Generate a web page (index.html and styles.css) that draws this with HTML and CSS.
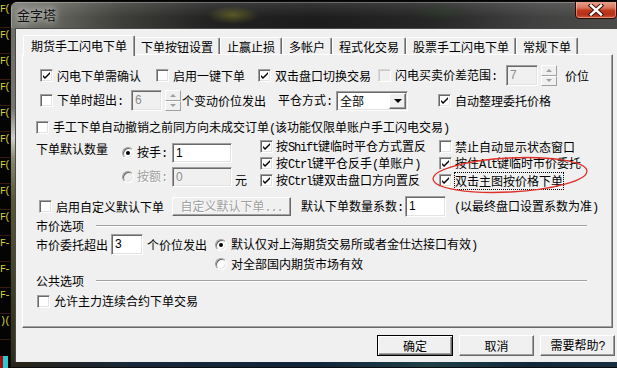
FILE: index.html
```html
<!DOCTYPE html>
<html lang="zh-CN">
<head>
    <meta charset="UTF-8">
    <meta name="viewport" content="width=device-width, initial-scale=1.0">
    <title>金字塔</title>
    <link rel="stylesheet" href="styles.css">
</head>
<body>
    <div class="desk">
        <div class="tick">F(</div>
        <div class="tick">F(</div>
        <div class="tick">F(</div>
        <div class="tick">F(</div>
        <div class="tick">F(</div>
        <div class="tick">F(</div>
        <div class="tick">F(</div>
        <div class="tick">F(</div>
        <div class="tick">F(</div>
        <div class="tick">F-</div>
        <div class="tick">F-</div>
        <div class="tick">F-</div>
        <div class="tick">)(</div>
        <div class="tick cyan"></div>
    </div>

    <div class="win">
        <div class="titlebar">
            <span class="title">金字塔</span>
            <span class="close">
                <svg width="16" height="12" viewBox="0 0 16 12">
                    <path d="M3 1.5 L13 10.5 M13 1.5 L3 10.5" stroke="#3a1008" stroke-width="4.4" stroke-linecap="square"/>
                    <path d="M3 1.5 L13 10.5 M13 1.5 L3 10.5" stroke="#fff" stroke-width="2.4" stroke-linecap="square"/>
                </svg>
            </span>
        </div>

        <div class="frame">
            <div class="frame-l"></div>
            <div class="client">
                <div class="tabs">
                    <span class="tab sel">期货手工闪电下单</span>
                    <span class="tab">下单按钮设置</span>
                    <span class="tab">止赢止损</span>
                    <span class="tab">多帐户</span>
                    <span class="tab">程式化交易</span>
                    <span class="tab">股票手工闪电下单</span>
                    <span class="tab">常规下单</span>
                </div>

                <div class="panel">
                    <!-- row 1 -->
                    <div class="row r1">
                        <span class="cb on"></span><span class="lb">闪电下单需确认</span>
                        <span class="cb ml15"></span><span class="lb">启用一键下单</span>
                        <span class="cb on ml13"></span><span class="lb">双击盘口切换交易</span>
                        <span class="cb off ml7"></span><span class="lb">闪电买卖价差范围<span class="lat">:</span></span>
                        <span class="edit dis w32 ml9">7</span>
                        <span class="spin ml3"><span><i class="up"></i></span><span><i class="down"></i></span></span>
                        <span class="lb ml8">价位</span>
                    </div>

                    <!-- row 2 -->
                    <div class="row r2">
                        <span class="cb"></span><span class="lb">下单时超出<span class="lat">:</span></span>
                        <span class="edit dis w31 ml8">6</span>
                        <span class="spin ml3"><span><i class="up"></i></span><span><i class="down"></i></span></span>
                        <span class="lb ml1">个变动价位发出</span>
                        <span class="lb ml12">平仓方式<span class="lat">:</span></span>
                        <span class="combo ml4"><span class="val">全部</span><span class="dd"><i></i></span></span>
                        <span class="cb on ml30"></span><span class="lb">自动整理委托价格</span>
                    </div>

                    <!-- row 3 -->
                    <div class="row r3">
                        <span class="cb"></span><span class="lb">手工下单自动撤销之前同方向未成交订单<span class="lat">(</span>该功能仅限单账户手工闪电交易<span class="lat">)</span></span>
                    </div>

                    <!-- default quantity block -->
                    <div class="block">
                        <span class="lb qty">下单默认数量</span>
                        <div class="radios">
                            <div class="rrow">
                                <span class="rd on"></span><span class="lb">按手<span class="lat">:</span></span>
                                <span class="edit w60">1</span>
                            </div>
                            <div class="rrow">
                                <span class="rd off"></span><span class="lb gray">按额<span class="lat">:</span></span>
                                <span class="edit dis w60">0</span>
                            </div>
                        </div>
                        <span class="lb yuan">元</span>
                        <div class="keys">
                            <div class="kitem"><span class="cb on"></span><span class="lb">按<span class="lat">Shift</span>键临时平仓方式置反</span></div>
                            <div class="kitem"><span class="cb"></span><span class="lb">禁止自动显示状态窗口</span></div>
                            <div class="kitem"><span class="cb on"></span><span class="lb">按<span class="lat">Ctrl</span>键平仓反手<span class="lat">(</span>单账户<span class="lat">)</span></span></div>
                            <div class="kitem"><span class="cb on"></span><span class="lb">按住<span class="lat">Alt</span>键临时市价委托</span></div>
                            <div class="kitem"><span class="cb on"></span><span class="lb">按<span class="lat">Ctrl</span>键双击盘口方向置反</span></div>
                            <div class="kitem"><span class="cb on"></span><span class="lb focus">双击主图按价格下单</span></div>
                        </div>
                    </div>

                    <!-- row 7 -->
                    <div class="row r7">
                        <span class="cb"></span><span class="lb">启用自定义默认下单</span>
                        <span class="pbtn dis ml8">自定义默认下单<span class="lat">...</span></span>
                        <span class="lb ml10">默认下单数量系数<span class="lat">:</span></span>
                        <span class="edit w41 ml2">1</span>
                        <span class="lb ml8"><span class="lat">(</span>以最终盘口设置系数为准<span class="lat">)</span></span>
                    </div>

                    <div class="row grp r8">
                        <span class="lb">市价选项</span><span class="etch"></span>
                    </div>

                    <div class="row r9">
                        <span class="lb">市价委托超出</span>
                        <span class="edit w32 ml3">3</span>
                        <span class="lb ml4">个价位发出</span>
                        <span class="rd on ml8"></span><span class="lb">默认仅对上海期货交易所或者金仕达接口有效<span class="lat">)</span></span>
                    </div>

                    <div class="row r10">
                        <span class="rd"></span><span class="lb">对全部国内期货市场有效</span>
                    </div>

                    <div class="row grp r11">
                        <span class="lb">公共选项</span><span class="etch"></span>
                    </div>

                    <div class="row r12">
                        <span class="cb"></span><span class="lb">允许主力连续合约下单交易</span>
                    </div>

                    <svg class="mark" width="162" height="42" viewBox="0 0 162 42">
                        <ellipse cx="81" cy="21" rx="77" ry="17" fill="none" stroke="#e0302a" stroke-width="1.3" transform="rotate(-3 81 21)"/>
                    </svg>
                </div>

                <div class="btns">
                    <button class="btn def">确定</button>
                    <button class="btn">取消</button>
                    <button class="btn">需要帮助<span class="lat">?</span></button>
                </div>
            </div>
        </div>
        <div class="frame-b"></div>
    </div>
</body>
</html>
```

FILE: styles.css
```css
body {
    margin: 0;
    width: 617px;
    height: 368px;
    overflow: hidden;
    position: relative;
    background: #040404;
    font-family: "Noto Sans CJK SC", sans-serif;
    font-size: 12px;
    color: #000;
}

/* desktop behind the dialog */
.desk {
    width: 10px;
    padding-top: 2px;
}
.tick {
    height: 25px;
    border-bottom: 1px solid #3c1a10;
    color: #d8d43a;
    font-family: "Liberation Mono", monospace;
    font-size: 10px;
    line-height: 16px;
    letter-spacing: -1.6px;
    white-space: nowrap;
}
.tick.cyan {
    border: none;
    height: 12px;
    margin-top: 16px;
    background: linear-gradient(90deg, #a01010 0 3px, #30c8d0 3px 8px, #000 8px);
}

/* window frame, cut by the right edge of the shot */
.win {
    position: absolute;
    left: 10px;
    top: 1px;
    width: 607px;
    height: 367px;
    border-radius: 7px 0 0 0;
    border: 1px solid #0c0c0c;
    border-right: none;
    box-sizing: border-box;
    overflow: hidden;
    background: #2a2a28;
}
.titlebar {
    height: 26px;
    position: relative;
    background:
        radial-gradient(ellipse 26px 9px at 222px 13px, rgba(150, 150, 40, 0.45), transparent),
        radial-gradient(ellipse 30px 9px at 430px 10px, rgba(40, 70, 40, 0.35), transparent),
        linear-gradient(180deg, rgba(255, 255, 255, 0.12), rgba(0, 0, 0, 0) 60%),
        linear-gradient(90deg, #7a7a74 0, #66665f 40px, #3e3e3a 110px, #222 200px, #1c1c1c 300px, #262626 420px, #404040 520px, #4a4a48 600px);
    box-shadow: inset 1px 1px rgba(255, 255, 255, 0.25);
}
.title {
    position: absolute;
    left: 6px;
    top: 5px;
    font-size: 13px;
    line-height: 16px;
    color: #111;
    text-shadow: 0 0 6px rgba(255, 255, 255, 0.8), 0 0 10px rgba(255, 255, 255, 0.5);
}
.close {
    position: absolute;
    left: 564px;
    top: -2px;
    width: 42px;
    height: 19px;
    border: 1px solid #2a0a06;
    border-radius: 0 0 4px 4px;
    box-sizing: border-box;
    background: linear-gradient(180deg, #e9a893 0, #d9745c 40%, #c23a1c 55%, #b3301a 80%, #d0583a 100%);
    box-shadow: inset 0 0 0 1px rgba(255, 220, 200, 0.45);
    display: flex;
    align-items: center;
    justify-content: center;
}

.frame {
    display: flex;
    height: 334px;
}
.frame-l {
    width: 4px;
    background: linear-gradient(180deg, #6e6e68 0, #77776f 80px, #d0d0c8 110px, #8a8a70 130px, #5a5a38 170px, #3e3e22 260px, #2e2e1c 334px);
}
.client {
    flex: 1;
    background: #f0f0f0;
    border-top: 1px solid #4a4a48;
    border-left: 1px solid #4a4a48;
    box-sizing: border-box;
}
.frame-b {
    height: 6px;
    background: linear-gradient(90deg, #2a2418 0, #18283a 120px, #10243a 300px, #1e4048 420px, #12283a 520px, #1a3040 607px);
}

/* tabs */
.tabs {
    display: flex;
    align-items: flex-end;
    height: 18px;
    margin-top: 7px;
    padding-left: 7px;
    position: relative;
    z-index: 1;
}
.tab {
    height: 17px;
    padding: 0 6px;
    line-height: 17px;
    white-space: nowrap;
    border-top: 1px solid #fff;
    border-left: 1px solid #fff;
    border-right: 1px solid #696969;
    box-shadow: inset -1px 0 #a0a0a0;
    border-radius: 2px 2px 0 0;
    box-sizing: border-box;
    background: #f0f0f0;
}
.tab.sel {
    height: 21px;
    padding: 0 7px;
    line-height: 19px;
    margin-bottom: -2px;
}
.tab.sel + .tab {
    border-left: none;
}

/* tab page */
.panel {
    position: relative;
    margin-left: 6px;
    width: 591px;
    height: 274px;
    box-sizing: border-box;
    border: 1px solid;
    border-color: #fff #696969 #696969 #fff;
    box-shadow: inset -1px -1px #a0a0a0;
}
.row {
    display: flex;
    align-items: center;
    height: 21px;
}
.r1 { margin-top: 10px; padding-left: 17px; }
.r2 { margin-top: 4px; padding-left: 17px; }
.r3 { margin-top: 8px; height: 17px; padding-left: 13px; }
.r7 { margin-top: 7px; padding-left: 16px; }
.r8 { margin-top: 1px; height: 16px; }
.r9 { margin-top: 0; padding-left: 13px; }
.r10 { margin-top: 1px; height: 16px; padding-left: 192px; }
.r11 { margin-top: 1px; height: 16px; }
.r12 { margin-top: 4px; height: 16px; padding-left: 14px; }

.grp {
    padding-left: 13px;
}
.etch {
    margin-left: 12px;
    width: 491px;
    height: 0;
    border-top: 1px solid #a0a0a0;
    border-bottom: 1px solid #fff;
}

.lb {
    white-space: nowrap;
    line-height: 16px;
}
.cb + .lb { margin-left: 4px; }
.rd + .lb { margin-left: 4px; }
.lat {
    font-family: "Liberation Mono", monospace;
    letter-spacing: -1.2px;
}
.gray {
    color: #a0a0a0;
    text-shadow: 1px 1px 0 #fff;
}

.ml1 { margin-left: 1px; }
.ml2 { margin-left: 2px; }
.ml3 { margin-left: 3px; }
.ml4 { margin-left: 4px; }
.ml7 { margin-left: 7px; }
.ml8 { margin-left: 8px; }
.ml9 { margin-left: 9px; }
.ml10 { margin-left: 10px; }
.ml12 { margin-left: 12px; }
.ml13 { margin-left: 13px; }
.ml15 { margin-left: 15px; }
.ml30 { margin-left: 30px; }

/* checkbox */
.cb {
    position: relative;
    flex: none;
    width: 13px;
    height: 13px;
    box-sizing: border-box;
    background: #fff;
    border: 1px solid;
    border-color: #a0a0a0 #fff #fff #a0a0a0;
    box-shadow: inset 1px 1px #696969, inset -1px -1px #e3e3e3;
}
.cb.on::after {
    content: "";
    position: absolute;
    left: 2px;
    top: 2px;
    width: 7px;
    height: 7px;
    background: #000;
    clip-path: polygon(0 42%, 28% 70%, 100% 0, 100% 30%, 28% 100%, 0 72%);
}
.cb.off {
    background: #f0f0f0;
    border-color: #d8d8d8 #fff #fff #d8d8d8;
    box-shadow: inset 1px 1px #c8c8c8;
}

/* radio */
.rd {
    position: relative;
    flex: none;
    width: 12px;
    height: 12px;
    box-sizing: border-box;
    border-radius: 50%;
    background: #fff;
    border: 1px solid;
    border-color: #a0a0a0 #fff #fff #a0a0a0;
    box-shadow: inset 1px 1px #696969, inset -1px -1px #e3e3e3;
}
.rd.on::after {
    content: "";
    position: absolute;
    left: 3px;
    top: 3px;
    width: 4px;
    height: 4px;
    border-radius: 50%;
    background: #000;
}
.rd.off {
    background: #f0f0f0;
}

/* edit boxes */
.edit {
    flex: none;
    height: 21px;
    box-sizing: border-box;
    padding-left: 3px;
    line-height: 18px;
    background: #fff;
    border: 1px solid;
    border-color: #a0a0a0 #fff #fff #a0a0a0;
    box-shadow: inset 1px 1px #696969, inset -1px -1px #e3e3e3;
    font-family: "Liberation Sans", sans-serif;
}
.edit.dis {
    background: #f0f0f0;
    color: #8c8c8c;
}
.w31 { width: 31px; }
.w32 { width: 32px; }
.w41 { width: 41px; }
.w60 { width: 60px; height: 20px; }

.spin {
    flex: none;
    display: flex;
    flex-direction: column;
    width: 16px;
    height: 21px;
}
.spin > span {
    flex: 1;
    display: flex;
    align-items: center;
    justify-content: center;
    background: #f0f0f0;
    border: 1px solid;
    border-color: #fff #a0a0a0 #a0a0a0 #fff;
}
.spin i {
    width: 0;
    height: 0;
    border-left: 3px solid transparent;
    border-right: 3px solid transparent;
}
.spin i.up { border-bottom: 3px solid #a0a0a0; }
.spin i.down { border-top: 3px solid #a0a0a0; }

.combo {
    flex: none;
    display: flex;
    align-items: center;
    width: 72px;
    height: 20px;
    box-sizing: border-box;
    background: #fff;
    border: 1px solid;
    border-color: #a0a0a0 #fff #fff #a0a0a0;
    box-shadow: inset 1px 1px #696969, inset -1px -1px #e3e3e3;
}
.combo .val {
    flex: 1;
    padding-left: 3px;
    line-height: 16px;
}
.combo .dd {
    width: 17px;
    height: 16px;
    margin-right: 1px;
    box-sizing: border-box;
    display: flex;
    align-items: center;
    justify-content: center;
    background: #f0f0f0;
    border: 1px solid;
    border-color: #fff #696969 #696969 #fff;
    box-shadow: inset -1px -1px #a0a0a0;
}
.combo .dd i {
    width: 0;
    height: 0;
    border-left: 4px solid transparent;
    border-right: 4px solid transparent;
    border-top: 4px solid #000;
}

/* quantity block */
.block {
    display: flex;
    margin-top: 2px;
    height: 51px;
}
.qty {
    margin-left: 13px;
    margin-top: 3px;
    align-self: flex-start;
}
.radios {
    margin-left: 14px;
    padding-top: 5px;
    display: flex;
    flex-direction: column;
    gap: 4px;
}
.rrow {
    display: flex;
    align-items: center;
    height: 20px;
}
.rrow .lb { margin-left: 3px; }
.rrow .edit { margin-left: 5px; }
.yuan {
    align-self: flex-end;
    margin-left: 3px;
    margin-bottom: 1px;
}
.keys {
    margin-left: 13px;
    display: grid;
    grid-template-columns: 179px 150px;
    grid-auto-rows: 17px;
}
.kitem {
    display: flex;
    align-items: center;
}
.kitem .lb { margin-left: 3px; }
.focus {
    outline: 1px dotted #000;
    outline-offset: 0;
}

/* push buttons */
.pbtn {
    flex: none;
    width: 119px;
    height: 19px;
    box-sizing: border-box;
    text-align: center;
    line-height: 16px;
    white-space: nowrap;
    background: #f0f0f0;
    border: 1px solid;
    border-color: #fff #696969 #696969 #fff;
    box-shadow: inset -1px -1px #a0a0a0;
}
.pbtn.dis {
    color: #a0a0a0;
    text-shadow: 1px 1px 0 #fff;
}

.mark {
    position: absolute;
    left: 406px;
    top: 99px;
}

.btns {
    display: flex;
    gap: 6px;
    margin-top: 7px;
    margin-left: 361px;
}
.btn {
    width: 75px;
    height: 21px;
    padding: 0;
    font: inherit;
    line-height: 17px;
    color: #000;
    background: #f0f0f0;
    border: 1px solid;
    border-color: #fff #696969 #696969 #fff;
    box-shadow: inset -1px -1px #a0a0a0;
}
.btn.def {
    width: 76px;
    border-color: #000;
    box-shadow: inset 1px 1px #fff, inset -1px -1px #696969, inset -2px -2px #a0a0a0;
}
```
